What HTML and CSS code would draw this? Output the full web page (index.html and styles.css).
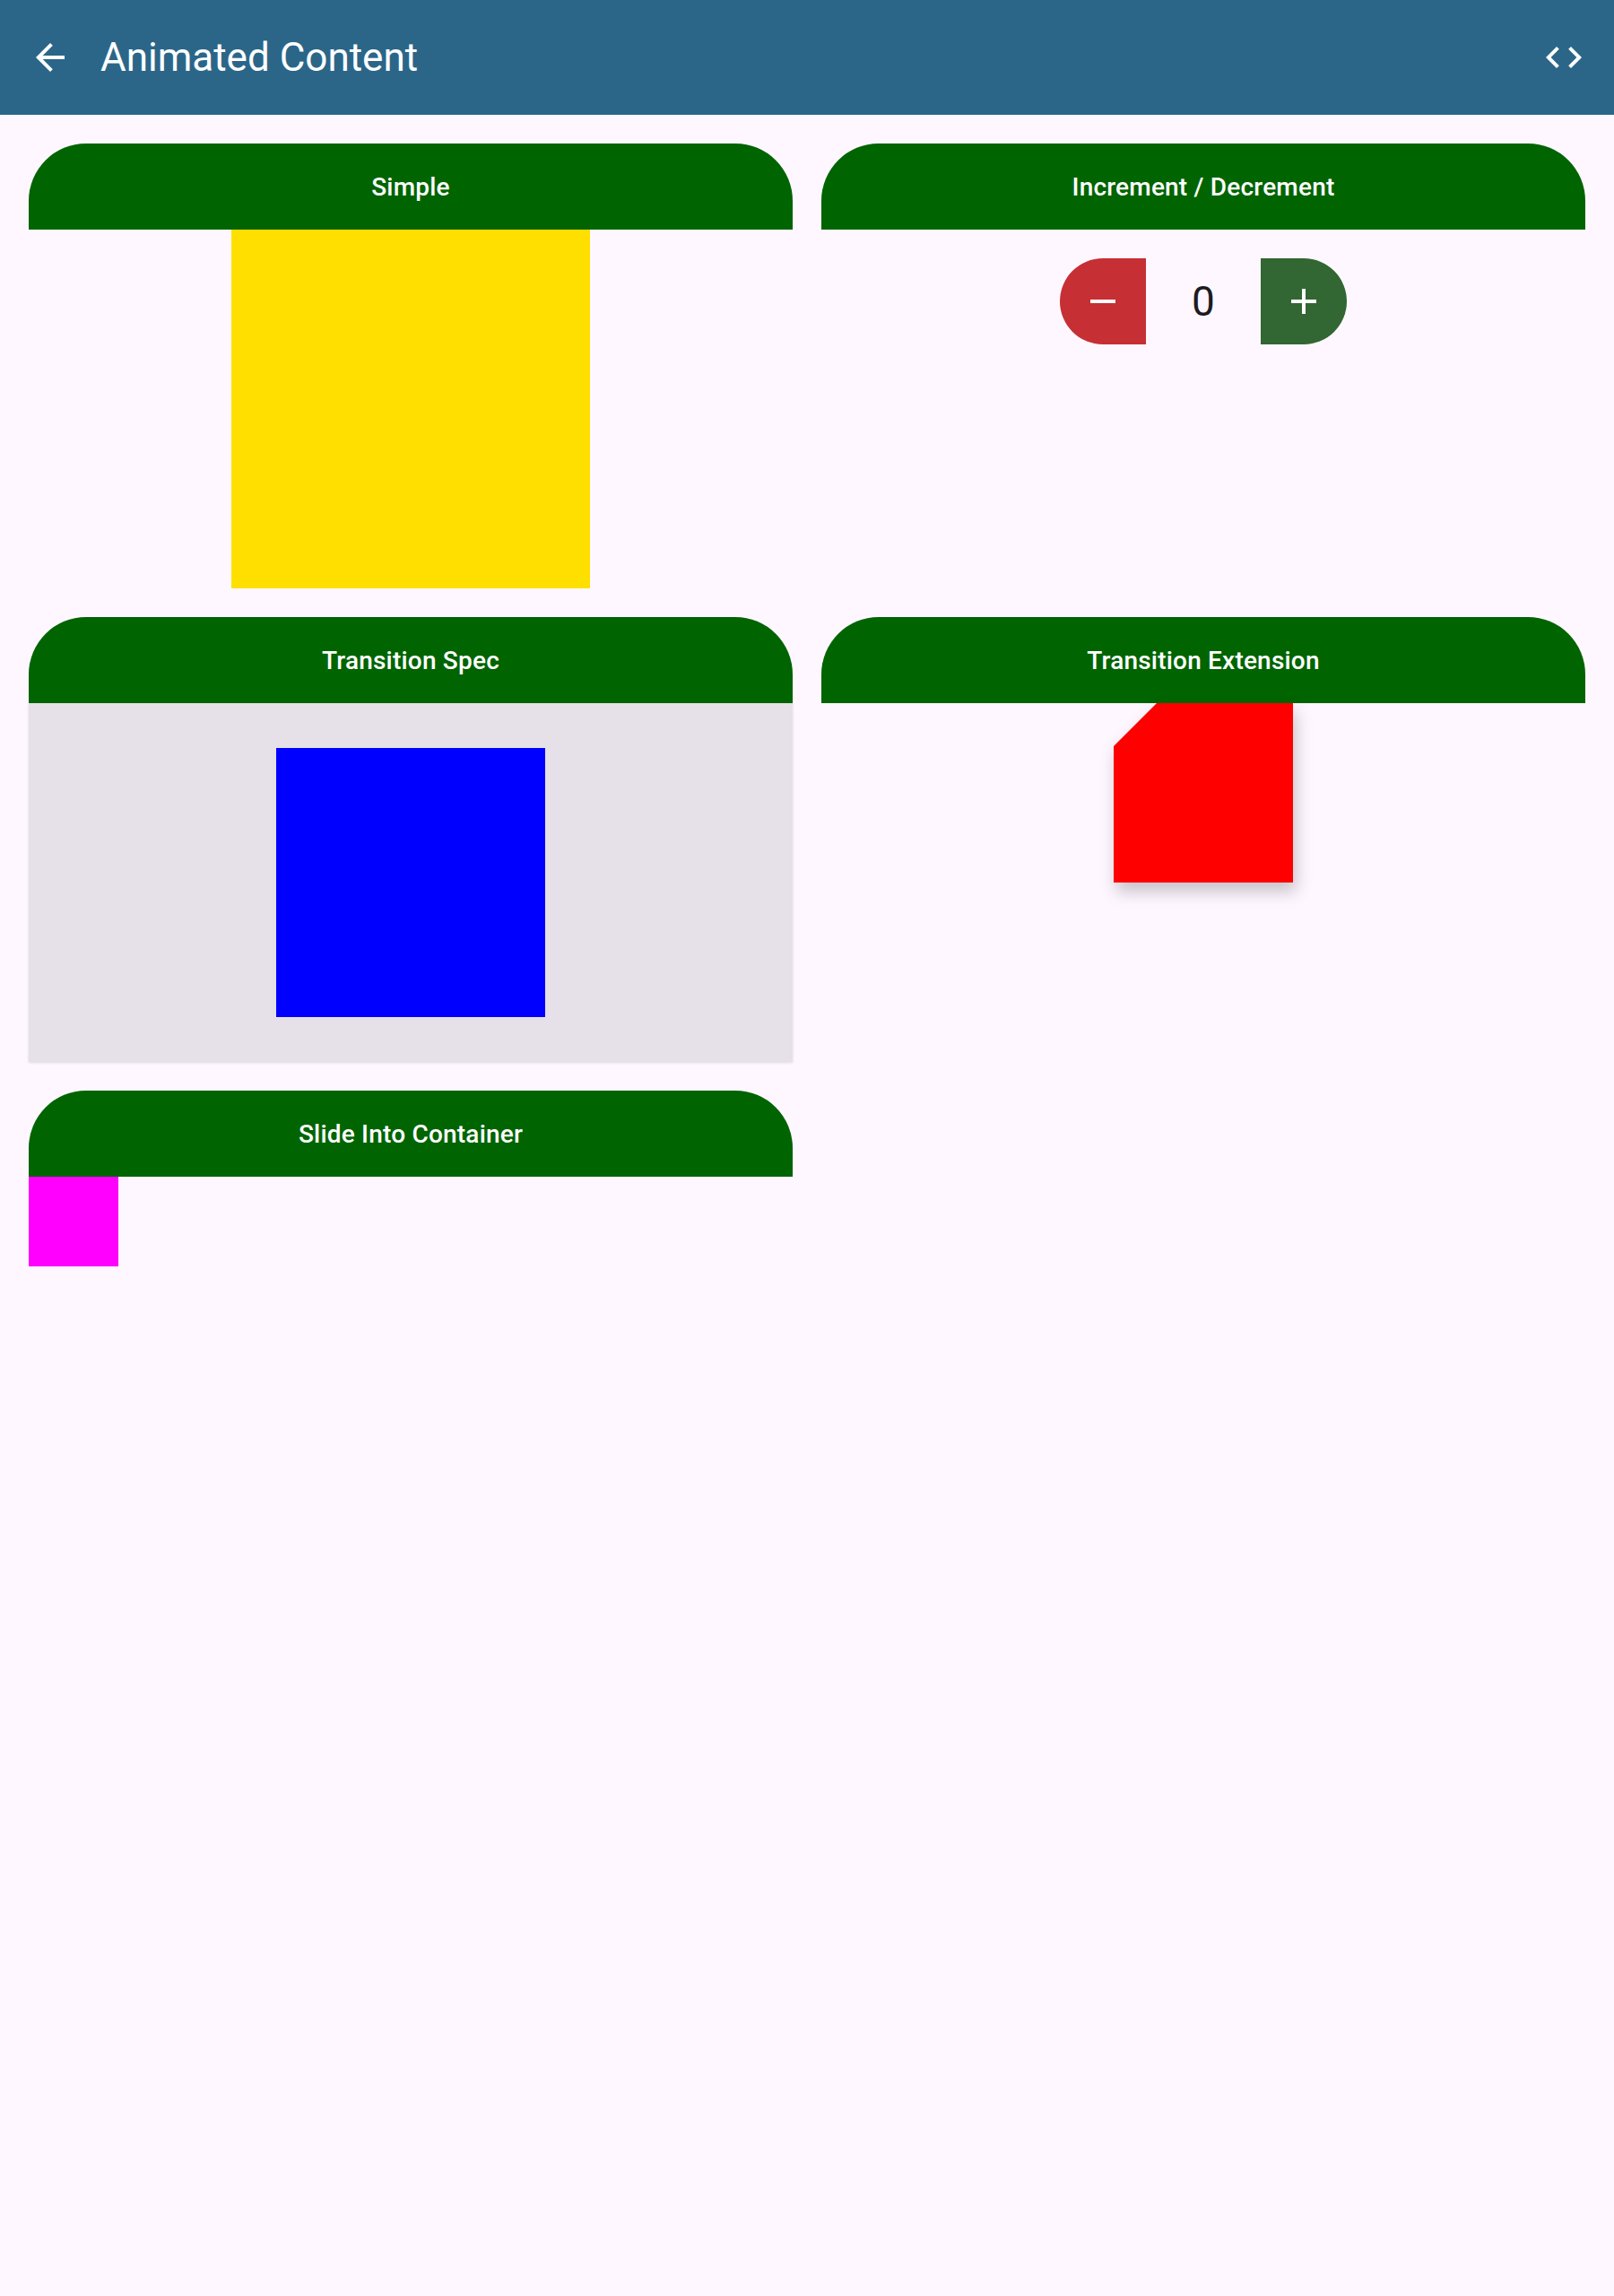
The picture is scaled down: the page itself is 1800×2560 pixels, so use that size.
FILE: index.html
```html
<!DOCTYPE html>
<html lang="en">
<head>
<meta charset="utf-8">
<title>Animated Content</title>
<link rel="stylesheet" href="styles.css">
</head>
<body>
<header class="appbar">
  <button class="icon-btn" aria-label="Back">
    <svg class="icon" viewBox="0 0 24 24"><path d="M20 11H7.83l5.59-5.59L12 4l-8 8 8 8 1.41-1.41L7.83 13H20v-2z"/></svg>
  </button>
  <h1 class="title">Animated Content</h1>
  <button class="icon-btn code-btn" aria-label="Source code">
    <svg class="icon" viewBox="0 0 24 24"><path d="M9.4 16.6L4.8 12l4.6-4.6L8 6l-6 6 6 6 1.4-1.4zm5.2 0l4.6-4.6-4.6-4.6L16 6l6 6-6 6-1.4-1.4z"/></svg>
  </button>
</header>
<main class="grid">
  <section class="card">
    <div class="card-header">Simple</div>
    <div class="card-body center-top">
      <div class="box yellow"></div>
    </div>
  </section>
  <section class="card">
    <div class="card-header">Increment / Decrement</div>
    <div class="card-body counter">
      <button class="step minus" aria-label="Decrement">
        <svg class="step-icon" viewBox="0 0 24 24"><path d="M19 13H5v-2h14v2z"/></svg>
      </button>
      <span class="count">0</span>
      <button class="step plus" aria-label="Increment">
        <svg class="step-icon" viewBox="0 0 24 24"><path d="M19 13h-6v6h-2v-6H5v-2h6V5h2v6h6v2z"/></svg>
      </button>
    </div>
  </section>
  <section class="card">
    <div class="card-header">Transition Spec</div>
    <div class="card-body spec">
      <div class="box blue"></div>
    </div>
  </section>
  <section class="card">
    <div class="card-header">Transition Extension</div>
    <div class="card-body center-top">
      <div class="shadow-wrap"><div class="box red"></div></div>
    </div>
  </section>
  <section class="card">
    <div class="card-header">Slide Into Container</div>
    <div class="card-body">
      <div class="box magenta"></div>
    </div>
  </section>
</main>
</body>
</html>
```
FILE: styles.css
```css
* { box-sizing: border-box; }

html, body {
  margin: 0;
  padding: 0;
}

body {
  background: #FEF7FF;
  min-height: 2560px;
  font-family: Roboto, "Noto Sans", "Liberation Sans", sans-serif;
  color: #1D1B20;
}

.appbar {
  height: 128px;
  background: #2B6689;
  display: flex;
  align-items: center;
  padding: 0 8px;
  color: #fff;
}

.icon-btn {
  width: 96px;
  height: 96px;
  border: 0;
  background: transparent;
  padding: 0;
  display: flex;
  align-items: center;
  justify-content: center;
  flex: none;
}

.icon {
  width: 48px;
  height: 48px;
  fill: #fff;
}

.title {
  margin: 0 0 0 8px;
  font-size: 44px;
  font-weight: 400;
  line-height: 56px;
  flex: 1;
}

.grid {
  display: grid;
  grid-template-columns: 1fr 1fr;
  gap: 32px;
  padding: 32px;
  align-items: start;
}

.card {
  display: flex;
  flex-direction: column;
}

.card-header {
  height: 96px;
  background: #006400;
  color: #fff;
  border-radius: 64px 64px 0 0;
  display: flex;
  align-items: center;
  justify-content: center;
  font-size: 28px;
  font-weight: 500;
  letter-spacing: 0.2px;
}

.card-body {
  display: flex;
}

.center-top {
  justify-content: center;
  align-items: flex-start;
}

.box { flex: none; }

.yellow {
  width: 400px;
  height: 400px;
  background: #FFDF00;
}

.counter {
  justify-content: center;
  align-items: center;
  padding-top: 32px;
}

.step {
  width: 96px;
  height: 96px;
  border: 0;
  padding: 0;
  display: flex;
  align-items: center;
  justify-content: center;
}

.minus {
  background: #C62F33;
  border-radius: 48px 0 0 48px;
}

.plus {
  background: #326632;
  border-radius: 0 48px 48px 0;
}

.step-icon {
  width: 48px;
  height: 48px;
  fill: #fff;
}

.count {
  width: 128px;
  text-align: center;
  font-size: 46px;
  line-height: 56px;
  color: #1D1B20;
}

.spec {
  height: 400px;
  background: #E6E0E9;
  justify-content: center;
  align-items: center;
  box-shadow: 0 1px 3px rgba(0, 0, 0, 0.12);
}

.blue {
  width: 300px;
  height: 300px;
  background: #0000FF;
}

.shadow-wrap {
  filter: drop-shadow(3px 10px 9px rgba(0, 0, 0, 0.22));
}

.red {
  width: 200px;
  height: 200px;
  background: #FF0000;
  clip-path: polygon(48px 0, 100% 0, 100% 100%, 0 100%, 0 48px);
}

.magenta {
  width: 100px;
  height: 100px;
  background: #FF00FF;
}
```
